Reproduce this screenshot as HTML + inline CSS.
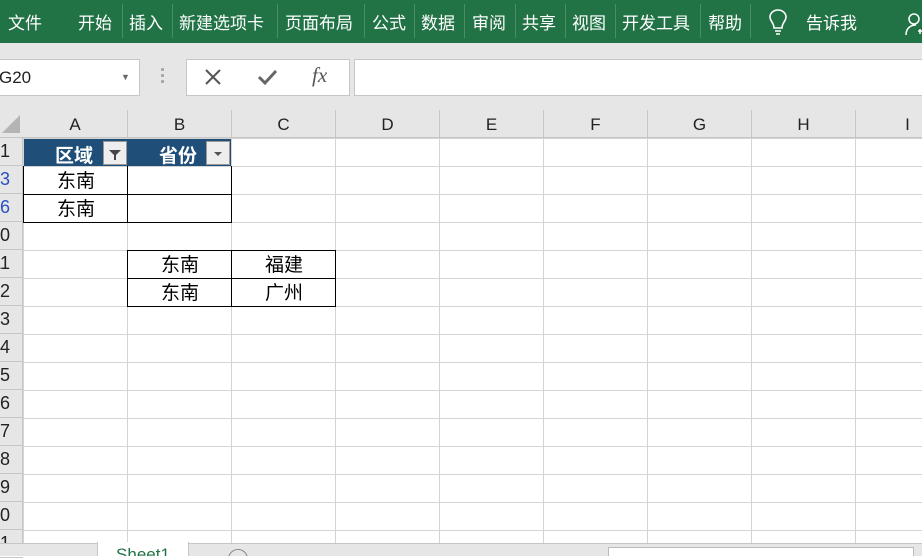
<!DOCTYPE html><html><head><meta charset="utf-8"><style>
*{margin:0;padding:0;box-sizing:border-box}
body{width:922px;height:556px;overflow:hidden;position:relative;background:#fff;font-family:"Liberation Sans","Noto Sans CJK SC",sans-serif}
.a{position:absolute}
.rib{left:0;top:0;width:922px;height:43px;background:#217346;color:#fff;font-size:17px}
.rib span{position:absolute;top:9px;white-space:nowrap}
.sep{position:absolute;top:4px;width:1px;height:34px;background:#4a8f63}
.grid{left:23px;top:138px;width:899px;height:405px;background-image:linear-gradient(to right,#d4d4d4 1px,transparent 1px),linear-gradient(to bottom,#d4d4d4 1px,transparent 1px);background-size:104px 28px;background-position:104px 0,0 28px}
.ch{top:110px;height:28px;font-size:17px;color:#222;text-align:center;line-height:30px;border-right:1px solid #c6c6c6}
.rh{left:0;width:23px;height:28px;font-size:18px;color:#222;overflow:hidden;border-bottom:1px solid #c6c6c6}
.rh i{position:absolute;left:-30px;width:40px;text-align:right;top:3px;font-style:normal}
.c{font-size:19px;text-align:center;line-height:28px;height:28px;width:104px}
</style></head><body>
<div class="a rib">
<span style="left:8px">文件</span><span style="left:78px">开始</span><span style="left:129px">插入</span><span style="left:179px">新建选项卡</span><span style="left:285px">页面布局</span><span style="left:372px">公式</span><span style="left:421px">数据</span><span style="left:472px">审阅</span><span style="left:522px">共享</span><span style="left:572px">视图</span><span style="left:622px">开发工具</span><span style="left:708px">帮助</span><span style="left:806px">告诉我</span>
<div class="sep" style="left:122px"></div><div class="sep" style="left:172px"></div><div class="sep" style="left:277px"></div><div class="sep" style="left:364px"></div><div class="sep" style="left:414px"></div><div class="sep" style="left:464px"></div><div class="sep" style="left:515px"></div><div class="sep" style="left:565px"></div><div class="sep" style="left:615px"></div><div class="sep" style="left:700px"></div><div class="sep" style="left:750px"></div>
<svg class="a" style="left:768px;top:9px" width="20" height="26" viewBox="0 0 20 26" fill="none" stroke="#fff" stroke-width="1.6"><path d="M6 19 C6 14 2 12 2 8 A8 7 0 0 1 18 8 C18 12 14 14 14 19 Z M7 22 H13 M8 25 H12"/></svg>
<svg class="a" style="left:904px;top:12px" width="18" height="24" fill="none" stroke="#fff" stroke-width="1.5"><circle cx="10" cy="7" r="5"/><path d="M2 23 C2 15 8 13 12 13 M14 19 H18 M16 17 V22"/></svg>
</div>
<div class="a" style="left:0;top:43px;width:922px;height:67px;background:#e6e6e6"></div>
<div class="a" style="left:-2px;top:59px;width:142px;height:37px;background:#fff;border:1px solid #c6c6c6;font-size:17px;line-height:35px;color:#222">G20<span style="position:absolute;left:122px;top:0;font-size:9px;color:#666">▼</span></div>
<div class="a" style="left:161px;top:68px;width:3px;height:16px;background-image:linear-gradient(#aaa 3px,transparent 3px);background-size:3px 6px"></div>
<div class="a" style="left:186px;top:59px;width:164px;height:37px;background:#fff;border:1px solid #c6c6c6"></div>
<svg class="a" style="left:203px;top:68px" width="20" height="18" stroke="#555" stroke-width="2"><path d="M3 2 L17 16 M17 2 L3 16"/></svg>
<svg class="a" style="left:257px;top:68px" width="22" height="18" fill="none" stroke="#666" stroke-width="3"><path d="M2 9 L8 15 L19 3"/></svg>
<div class="a" style="left:312px;top:63px;font-family:'Liberation Serif',serif;font-style:italic;font-size:21px;color:#555">fx</div>
<div class="a" style="left:354px;top:59px;width:570px;height:37px;background:#fff;border:1px solid #c6c6c6"></div>
<div class="a" style="left:0;top:110px;width:922px;height:28px;background:#e6e6e6;border-bottom:1px solid #c6c6c6"></div>
<svg class="a" style="left:0;top:113px" width="22" height="22"><path d="M20 2 V20 H2 Z" fill="#b4b4b4"/></svg>
<div class="a ch" style="left:23px;width:105px">A</div><div class="a ch" style="left:128px;width:104px">B</div><div class="a ch" style="left:232px;width:104px">C</div><div class="a ch" style="left:336px;width:104px">D</div><div class="a ch" style="left:440px;width:104px">E</div><div class="a ch" style="left:544px;width:104px">F</div><div class="a ch" style="left:648px;width:104px">G</div><div class="a ch" style="left:752px;width:104px">H</div><div class="a ch" style="left:856px;width:104px">I</div>
<div class="a" style="left:0;top:138px;width:23px;height:405px;background:#e6e6e6;border-right:1px solid #c6c6c6"></div>
<div class="a rh" style="top:138px"><i>1</i></div><div class="a rh" style="top:166px;color:#2a4fc4"><i>3</i></div><div class="a rh" style="top:194px;color:#2a4fc4"><i>6</i></div><div class="a rh" style="top:222px"><i>10</i></div><div class="a rh" style="top:250px"><i>11</i></div><div class="a rh" style="top:278px"><i>12</i></div><div class="a rh" style="top:306px"><i>13</i></div><div class="a rh" style="top:334px"><i>14</i></div><div class="a rh" style="top:362px"><i>15</i></div><div class="a rh" style="top:390px"><i>16</i></div><div class="a rh" style="top:418px"><i>17</i></div><div class="a rh" style="top:446px"><i>18</i></div><div class="a rh" style="top:474px"><i>19</i></div><div class="a rh" style="top:502px"><i>20</i></div><div class="a rh" style="top:530px"><i>21</i></div>
<div class="a grid"></div>
<div class="a" style="left:24px;top:139px;width:207px;height:27px;background:#1f4e79"></div>
<div class="a" style="left:55px;top:141px;color:#fff;font-weight:bold;font-size:19px">区域</div>
<div class="a" style="left:159px;top:141px;color:#fff;font-weight:bold;font-size:19px">省份</div>
<div class="a" style="left:103px;top:141px;width:24px;height:24px;background:#eee;border:1px solid #999"><svg width="22" height="22"><path d="M5 8 H17 L12 13 V18 H10 V13 Z" fill="#444"/></svg></div>
<div class="a" style="left:206px;top:141px;width:24px;height:24px;background:#eee;border:1px solid #999"><svg width="22" height="22"><path d="M7 10 H15 L11 14 Z" fill="#555"/></svg></div>
<div class="a" style="left:23px;top:166px;width:209px;height:57px;border:1px solid #000;border-top:none"></div>
<div class="a" style="left:127px;top:166px;width:1px;height:57px;background:#000"></div>
<div class="a" style="left:23px;top:194px;width:209px;height:1px;background:#000"></div>
<div class="a c" style="left:24px;top:168px">东南</div><div class="a c" style="left:24px;top:196px">东南</div>
<div class="a" style="left:127px;top:250px;width:209px;height:57px;border:1px solid #000"></div>
<div class="a" style="left:231px;top:250px;width:1px;height:57px;background:#000"></div>
<div class="a" style="left:127px;top:278px;width:209px;height:1px;background:#000"></div>
<div class="a c" style="left:128px;top:252px">东南</div><div class="a c" style="left:232px;top:252px">福建</div>
<div class="a c" style="left:128px;top:280px">东南</div><div class="a c" style="left:232px;top:280px">广州</div>
<div class="a" style="left:0;top:543px;width:922px;height:13px;background:#e6e6e6;border-top:1px solid #c6c6c6;overflow:hidden">
<div class="a" style="left:228px;top:5px;width:20px;height:20px;border:1px solid #888;border-radius:50%"></div>
<div class="a" style="left:608px;top:3px;width:306px;height:12px;background:#fff;border:1px solid #bbb"></div>
</div>
<div class="a" style="left:97px;top:542px;width:92px;height:14px;background:#fff;border-left:1px solid #c6c6c6;border-right:1px solid #c6c6c6;color:#217346;font-size:17px;text-align:center;line-height:26px;overflow:hidden">Sheet1</div>
</body></html>
